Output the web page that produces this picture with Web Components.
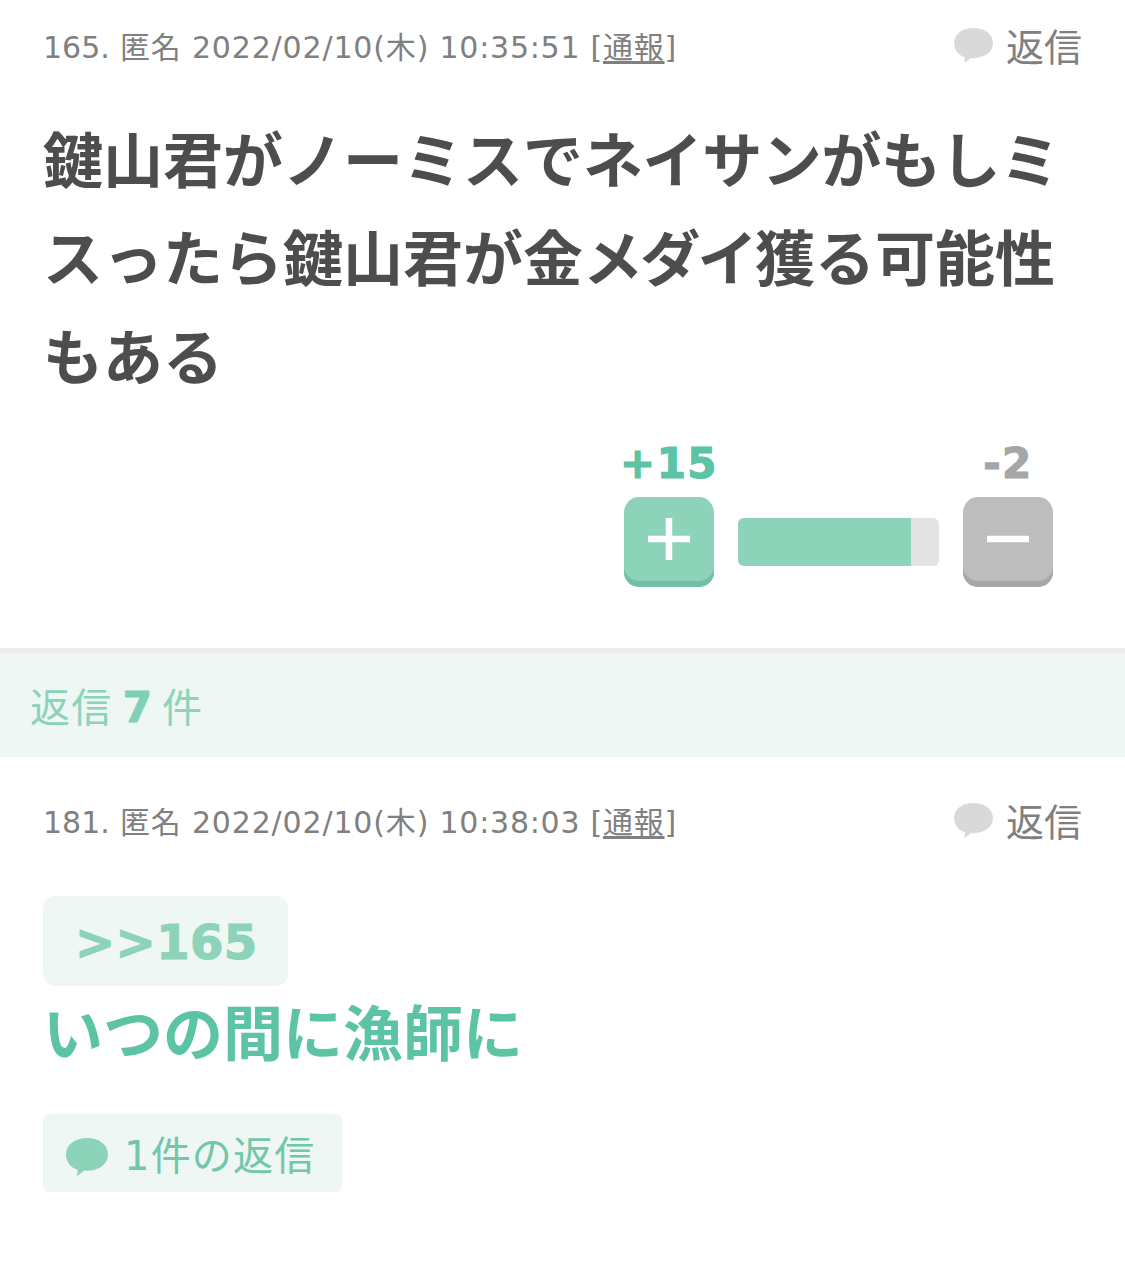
<!DOCTYPE html>
<html lang="ja">
<head>
<meta charset="utf-8">
<style>
  body{margin:0;background:#fff;font-family:"DejaVu Sans","Noto Sans CJK JP",sans-serif;}
  .tight1{letter-spacing:-.4px;}
  .tight2{letter-spacing:-2.700px;}
</style>
</head>
<body>
<rk-comment-head num="165." date="2022/02/10(木)" time="10:35:51"></rk-comment-head>
<rk-comment-body><span>鍵山君がノーミスで</span><span class="tight1">ネイサンがもしミ</span><span>スったら鍵山君が金</span><span class="tight2">メダイ</span><span>獲る可能性</span><span>もある</span></rk-comment-body>
<rk-vote plus="+15" minus="-2" ratio="86"></rk-vote>
<rk-reply-bar count="7"></rk-reply-bar>
<rk-comment-head num="181." date="2022/02/10(木)" time="10:38:03" style="margin-top:18px"></rk-comment-head>
<rk-anchor>&gt;&gt;165</rk-anchor>
<rk-comment-body green>いつの間に漁師に</rk-comment-body>
<rk-reply-link>1件の返信</rk-reply-link>

<script>
const bubble = `<svg viewBox="0 0 40 36"><path d="M20 0C31 0 40 6 40 15.500C40 25 31 31 20 31C19 31 18 31 17 31C15 33 12 35 10 36C11 34 11 32 11 30C4 28 0 22 0 15.500C0 6 9 0 20 0Z" fill="currentColor"/></svg>`;

class CommentHead extends HTMLElement{
  constructor(){
    super();
    this.attachShadow({mode: 'open'});
  }
  connectedCallback(){
    const num = this.getAttribute('num');
    const date = this.getAttribute('date');
    const time = this.getAttribute('time');
    this.shadowRoot.innerHTML = `
      <style>
        :host{display:flex;justify-content:space-between;align-items:center;height:90px;padding:0 43px;box-sizing:border-box;color:#808080;font-size:30px;}
        .meta{letter-spacing:.75px;white-space:nowrap;}
        .num{letter-spacing:0;}
        .date{letter-spacing:.85px;}
        u{text-underline-offset:3px;}
        .reply{display:flex;align-items:center;gap:13px;font-size:38px;margin-top:-1px;}
        svg{width:39px;height:35px;color:#d9d9d9;margin-top:2px;}
      </style>
      <div class="meta"><span class="num">${num}</span> 匿名 <span class="date">${date}</span> ${time} [<u>通報</u>]</div>
      <div class="reply">${bubble}<span>返信</span></div>`;
  }
}

class CommentBody extends HTMLElement{
  constructor(){
    super();
    this.attachShadow({mode: 'open'});
    this.shadowRoot.innerHTML = `
      <style>
        :host{display:block;padding:23px 43px 0;font-size:60px;font-weight:700;line-height:98.400px;color:#4d4d4d;}
        :host([green]){padding-top:0;color:#5cc4a4;}
      </style>
      <slot></slot>`;
  }
}

class VoteBox extends HTMLElement{
  constructor(){
    super();
    this.attachShadow({mode: 'open'});
  }
  connectedCallback(){
    this.shadowRoot.innerHTML = `
      <style>
        :host{display:flex;justify-content:flex-end;gap:24px;padding:28px 72px 61px 0;}
        .col{width:90px;display:flex;flex-direction:column;align-items:center;}
        .n{font-size:42px;font-weight:700;line-height:56px;height:61px;white-space:nowrap;letter-spacing:1.500px;-webkit-text-stroke:1.200px currentColor;}
        .plus .n{color:#5cc4a4;}
        .minus .n{color:#a6a6a6;}
        .btn{width:90px;height:90px;border-radius:15px;box-sizing:border-box;display:flex;align-items:center;justify-content:center;padding-bottom:6px;}
        .plus .btn{background:#8cd3b9;box-shadow:inset 0 -6px 0 #73bfa4;}
        .minus .btn{background:#bdbdbd;box-shadow:inset 0 -6px 0 #a6a6a6;}
        .btn svg{width:42px;height:42px;}
        .bar{width:201px;height:48px;margin-top:82px;border-radius:6px;background:#e3e3e3;overflow:hidden;}
        .fill{height:100%;background:#8cd3b9;width:${this.getAttribute('ratio')}%;}
      </style>
      <div class="col plus">
        <div class="n">${this.getAttribute('plus')}</div>
        <div class="btn"><svg viewBox="0 0 42 42"><path d="M17.750 0h6.500v17.750H42v6.500H24.250V42h-6.500V24.250H0v-6.500h17.750z" fill="#fff"/></svg></div>
      </div>
      <div class="bar"><div class="fill"></div></div>
      <div class="col minus">
        <div class="n">${this.getAttribute('minus')}</div>
        <div class="btn"><svg viewBox="0 0 42 42"><rect x="0" y="17.750" width="42" height="6.500" fill="#fff"/></svg></div>
      </div>`;
  }
}

class ReplyBar extends HTMLElement{
  constructor(){
    super();
    this.attachShadow({mode: 'open'});
  }
  connectedCallback(){
    this.shadowRoot.innerHTML = `
      <style>
        :host{display:flex;align-items:center;height:109px;box-sizing:border-box;padding:0 30px;background:#eef7f4;border-top:5px solid #ececec;color:#8cd3b9;font-size:40px;word-spacing:-2.500px;}
        .label{letter-spacing:1.200px;}
        b{font-size:42px;color:#7fd1b5;-webkit-text-stroke:1.200px currentColor;}
      </style>
      <span><span class="label">返信</span> <b>${this.getAttribute('count')}</b> 件</span>`;
  }
}

class AnchorTag extends HTMLElement{
  constructor(){
    super();
    this.attachShadow({mode: 'open'});
    this.shadowRoot.innerHTML = `
      <style>
        :host{display:block;box-sizing:border-box;margin:31px 0 0 43px;width:245px;height:90px;line-height:92px;padding:0 32px;border-radius:12px;background:#eef7f4;color:#8cd3b9;font-size:48px;font-weight:700;white-space:nowrap;letter-spacing:.400px;-webkit-text-stroke:1.200px currentColor;}
      </style>
      <slot></slot>`;
  }
}

class ReplyLink extends HTMLElement{
  constructor(){
    super();
    this.attachShadow({mode: 'open'});
    this.shadowRoot.innerHTML = `
      <style>
        :host{display:flex;align-items:center;gap:16px;width:max-content;margin:29px 0 0 43px;height:78px;padding:0 27px 0 23px;border-radius:6px;background:#eef7f4;color:#72c6aa;font-size:40px;letter-spacing:1.200px;}
        svg{width:42px;height:38px;color:#8cd3b9;margin-top:9px;}
      </style>
      ${bubble}<span><slot></slot></span>`;
  }
}

customElements.define('rk-comment-head', CommentHead);
customElements.define('rk-comment-body', CommentBody);
customElements.define('rk-vote', VoteBox);
customElements.define('rk-reply-bar', ReplyBar);
customElements.define('rk-anchor', AnchorTag);
customElements.define('rk-reply-link', ReplyLink);
</script>
</body>
</html>
